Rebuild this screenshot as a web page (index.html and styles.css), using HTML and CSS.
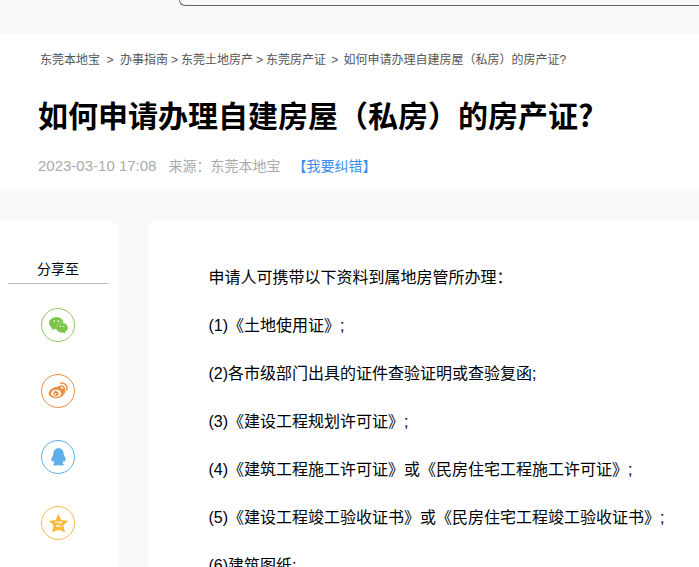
FILE: index.html
```html
<!DOCTYPE html>
<html lang="zh-CN">
<head>
<meta charset="utf-8">
<title>如何申请办理自建房屋（私房）的房产证?</title>
<link rel="stylesheet" href="styles.css">
</head>
<body>
<header class="top"><div class="search"></div></header>
<section class="head">
  <nav class="crumbs">
    <a class="c1">东莞本地宝</a><i class="s1">&gt;</i><a>办事指南</a><i class="s2">&gt;</i><a>东莞土地房产</a><i class="s2">&gt;</i><a>东莞房产证</a><i class="s3">&gt;</i><span>如何申请办理自建房屋（私房）的房产证?</span>
  </nav>
  <h1>如何申请办理自建房屋（私房）的房产证?</h1>
  <div class="meta"><span class="date">2023-03-10 17:08</span><span class="src">来源：东莞本地宝</span><a class="fix">【我要纠错】</a></div>
</section>
<main class="main">
  <aside class="share">
    <div class="share-title">分享至</div>
    <a class="ico wx"><svg width="24" height="24" viewBox="0 0 24 24"><ellipse cx="9.500" cy="9.200" rx="8.300" ry="7" fill="#7bc549"/><path d="M5 14l-1 3.500 4-2z" fill="#7bc549"/><ellipse cx="16" cy="14.600" rx="6.800" ry="5.800" fill="#7bc549" stroke="#fff" stroke-width=".3"/><path d="M19 18.500l1.200 2.900-3.600-1.800z" fill="#7bc549"/><circle cx="7" cy="7" r=".9" fill="#fff"/><circle cx="12" cy="7" r=".9" fill="#fff"/><circle cx="14" cy="13" r=".8" fill="#fff"/><circle cx="18" cy="13" r=".8" fill="#fff"/></svg></a>
    <a class="ico wb"><svg width="24" height="24" viewBox="0 0 24 24"><path d="M10.400 6.600c3.400-1.800 5.400-.6 4.600 2.200 3.400-1.200 5.600.8 4.800 3.400-1.100 4.400-6.200 7.600-11 7.400C4.200 19.400.8 17.400.8 14c0-2.800 5-7.400 9.600-7.400z" fill="#ec8e42"/><ellipse cx="9.300" cy="14.200" rx="5.700" ry="4.200" fill="#fff"/><circle cx="9" cy="14.400" r="3" fill="#ec8e42"/><circle cx="8.400" cy="15" r=".9" fill="#fff"/><path d="M14.500 2.400c4.600-.9 8.400 3.200 7.200 8M14.800 5.800c2.500-.5 4.500 1.700 3.800 4.200" fill="none" stroke="#ec8e42" stroke-width="1.700" stroke-linecap="round"/></svg></a>
    <a class="ico qq"><svg width="24" height="24" viewBox="0 0 24 24"><path d="M12 1.500c4 0 5.800 3 5.900 6.800.1 1 .6 1.700 1.400 3.200 1 2 1.100 4.200.3 4.900-.5.400-1.200-.3-1.600-1-.2 1.300-.9 2.500-1.700 3.200 1.200.4 1.900 1 1.700 1.700-.3.800-2.200 1-3.700.7-.9-.2-1.500-.5-2.300-.5s-1.400.3-2.300.5c-1.500.3-3.400.1-3.700-.7-.2-.7.500-1.300 1.700-1.700-.8-.7-1.500-1.900-1.700-3.200-.4.700-1.100 1.400-1.600 1-.8-.7-.7-2.900.3-4.900.8-1.500 1.300-2.200 1.400-3.200.1-3.800 1.900-6.800 5.900-6.800z" fill="#5daee8"/></svg></a>
    <a class="ico qz"><svg width="24" height="24" viewBox="0 0 24 24"><path d="M12 1l3.300 7 8 1-5.700 5.100 1.700 7.900L12 19l-7.300 3 1.700-7.900L.7 9l8-1z" fill="#fdb83c"/><path d="M7.800 10.300h8.400l-7 4.900h7" fill="none" stroke="#fff" stroke-width="1.100"/></svg></a>
  </aside>
  <article class="article">
    <p>申请人可携带以下资料到属地房管所办理：</p>
    <p>(1)《土地使用证》;</p>
    <p>(2)各市级部门出具的证件查验证明或查验复函;</p>
    <p>(3)《建设工程规划许可证》;</p>
    <p>(4)《建筑工程施工许可证》或《民房住宅工程施工许可证》;</p>
    <p>(5)《建设工程竣工验收证书》或《民房住宅工程竣工验收证书》;</p>
    <p>(6)建筑图纸;</p>
  </article>
</main>
</body>
</html>
```
FILE: styles.css
```css
* { box-sizing: border-box; }
html, body { margin: 0; height: 567px; overflow: hidden; }
body {
  background: #f9f9f9;
  font-family: "Liberation Sans", "Noto Sans CJK SC", sans-serif;
  color: #000;
}
.top { height: 34px; padding-left: 179px; }
.search {
  height: 6px;
  border-left: 1px solid #666;
  border-bottom: 1px solid #666;
  border-bottom-left-radius: 10px;
}
.head { background: #fff; height: 157px; padding: 16px 0 0 38px; border-top-left-radius: 4px; }
.crumbs { display: flex; font-size: 12px; line-height: 20px; color: #555; padding-left: 2px; }
.crumbs i { font-style: normal; text-align: center; }
.s1 { width: 20px; }
.s2 { width: 13px; }
.s3 { width: 17.500px; }
h1 {
  margin: 20px 0 0; font-size: 30px; line-height: 48px; font-weight: 700; color: #000;
  font-family: "Noto Sans CJK SC", sans-serif;
}
.meta { margin-top: 18px; font-size: 14px; line-height: 20px; color: #aaa; display: flex; }
.date { font-size: 15px; }
.src { margin-left: 12px; }
.fix { margin-left: 12px; color: #3b8cf0; }
.main { display: flex; gap: 30px; margin-top: 30px; }
.share {
  width: 118px; height: 400px; background: #fff;
  border-radius: 4px 8px 0 0; padding: 38px 10px 0 8px;
  display: flex; flex-direction: column; align-items: center;
}
.share-title {
  width: 100%; font-size: 14px; line-height: 20px; height: 25px;
  text-align: center; border-bottom: 1px solid #b8bdbb; color: #000;
}
.ico {
  width: 34px; height: 34px; border-radius: 50%; border: 1px solid;
  display: flex; align-items: center; justify-content: center; margin-top: 32px;
}
.ico svg { width: 21px; height: 21px; }
.share-title + .ico { margin-top: 24px; }
.wx { border-color: #8ccb63; }
.wb { border-color: #ec8e42; }
.qq { border-color: #5daee8; }
.qz { border-color: #fdb84a; }
.article {
  flex: 1; background: #fff; border-radius: 8px 0 0 0;
  height: 400px; padding: 33px 0 0 60.500px; overflow: hidden;
}
.article p { margin: 0; font-size: 16px; line-height: 48px; white-space: nowrap; color: #000; }
```
